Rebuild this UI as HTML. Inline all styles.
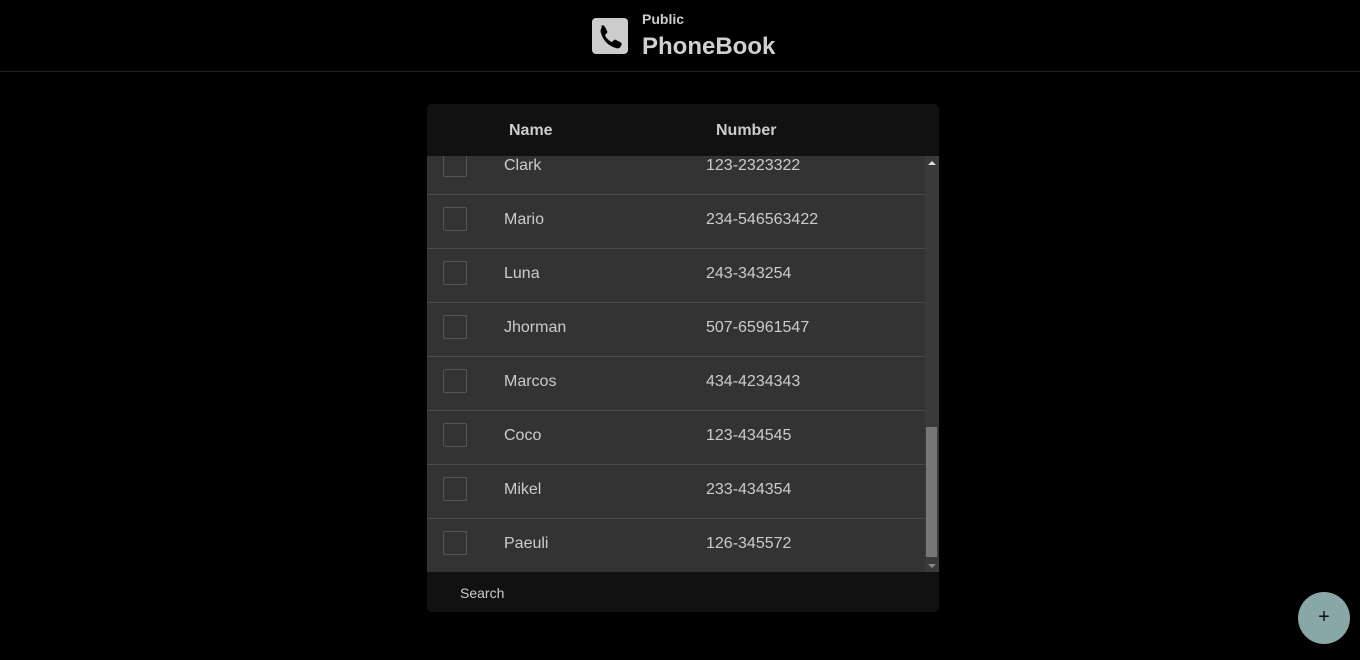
<!DOCTYPE html>
<html><head><style>
*{margin:0;padding:0;box-sizing:border-box}
body{width:1360px;height:660px;background:#000;font-family:"Liberation Sans",sans-serif;position:relative;overflow:hidden;color:#ccc}
.hdr{position:absolute;left:0;top:0;width:1360px;height:72px;border-bottom:1px solid #222}
.ic{position:absolute;left:592px;top:18px;width:36px;height:36px;background:#ccc;border-radius:4px}
.pub{position:absolute;left:642px;top:11px;font-size:14px;font-weight:bold;color:#ccc}
.pb{position:absolute;left:642px;top:33px;font-size:24px;font-weight:bold;color:#d0d0d0}
.tbl{position:absolute;left:427px;top:104px;width:512px;height:508px;border-radius:6px;overflow:hidden;background:#333}
.th{position:absolute;left:0;top:0;width:512px;height:52px;background:#111;font-weight:bold;font-size:16px}
.th span{position:absolute;top:18px}
.body{position:absolute;left:0;top:52px;width:498px;height:416px;overflow:hidden}
.row{position:absolute;left:0;width:498px;height:54px;border-bottom:1px solid #4a4a4a;font-size:16px}
.cb{position:absolute;left:16px;top:12px;width:24px;height:24px;border:1px solid #555;border-radius:2px}
.n{position:absolute;left:77px;top:16px}
.m{position:absolute;left:279px;top:16px}
.sb{position:absolute;left:498px;top:52px;width:14px;height:416px;background:#3a3a3a}
.th2{position:absolute;left:1px;top:271px;width:11px;height:130px;background:#777}
.ft{position:absolute;left:0;top:468px;width:512px;height:40px;background:#111;font-size:14px}
.fab{position:absolute;left:1298px;top:592px;width:52px;height:52px;border-radius:50%;background:#8aa7a7;color:#111;font-size:20px;text-align:center;line-height:50px}
</style></head><body>
<div class="hdr">
<div class="ic"><svg width="36" height="36" viewBox="0 0 36 36"><path d="M9 8c2-1 3-1 4 1l2 4c1 1 0 2-1 3l-1 1c1 3 4 6 7 7l1-1c1-1 2-2 3-1l4 2c2 1 2 2 1 4-1 2-3 3-5 2-8-2-13-8-15-15-1-2 0-5 1-6z" fill="#000"/></svg></div>
<div class="pub">Public</div><div class="pb">PhoneBook</div>
</div>
<div class="tbl">
<div class="th"><span style="left:82px">Name</span><span style="left:289px">Number</span></div>
<div class="body">
<div class="row" style="top:-15px"><div class="cb"></div><div class="n">Clark</div><div class="m">123-2323322</div></div>
<div class="row" style="top:39px"><div class="cb"></div><div class="n">Mario</div><div class="m">234-546563422</div></div>
<div class="row" style="top:93px"><div class="cb"></div><div class="n">Luna</div><div class="m">243-343254</div></div>
<div class="row" style="top:147px"><div class="cb"></div><div class="n">Jhorman</div><div class="m">507-65961547</div></div>
<div class="row" style="top:201px"><div class="cb"></div><div class="n">Marcos</div><div class="m">434-4234343</div></div>
<div class="row" style="top:255px"><div class="cb"></div><div class="n">Coco</div><div class="m">123-434545</div></div>
<div class="row" style="top:309px"><div class="cb"></div><div class="n">Mikel</div><div class="m">233-434354</div></div>
<div class="row" style="top:363px"><div class="cb"></div><div class="n">Paeuli</div><div class="m">126-345572</div></div>
</div>
<div class="sb"><div style="position:absolute;left:3px;top:5px;border:4px solid transparent;border-bottom:4px solid #ddd;border-top:0"></div><div class="th2"></div><div style="position:absolute;left:3px;top:408px;border:4px solid transparent;border-top:4px solid #888;border-bottom:0"></div></div>
<div class="ft"><span style="position:absolute;left:33px;top:13px">Search</span></div>
</div>
<div class="fab">+</div>
</body></html>
